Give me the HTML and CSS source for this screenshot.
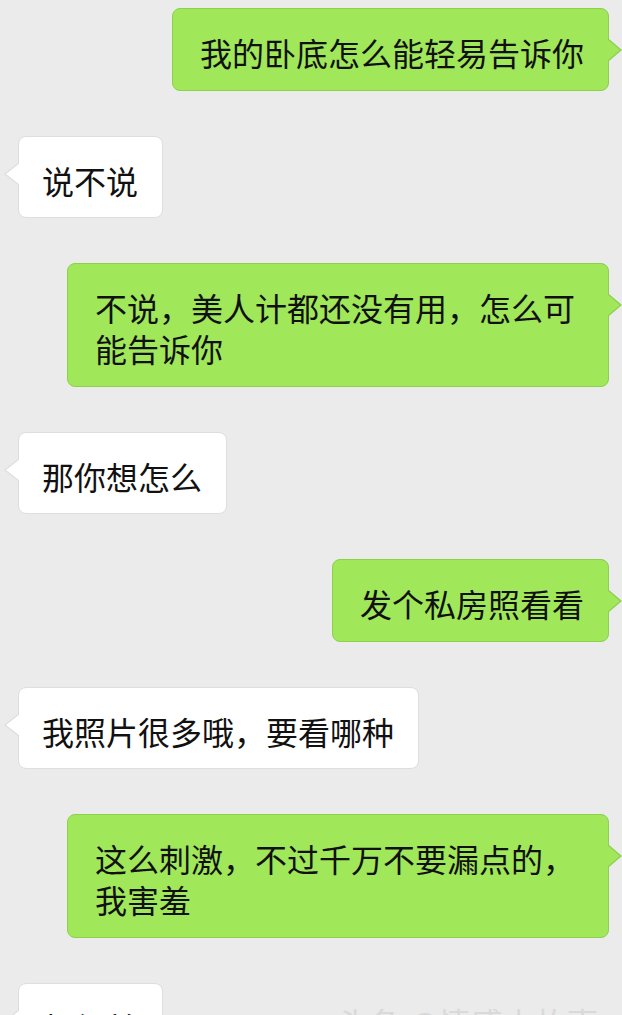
FILE: index.html
```html
<!DOCTYPE html>
<html lang="zh-CN">
  <head>
    <meta charset="UTF-8" />
    <meta name="viewport" content="width=device-width, initial-scale=1.0" />
    <title>聊天记录</title>
    <link rel="stylesheet" href="styles.css">
  </head>
  <body>
    <div class="chat">
      <div class="msg me">我的卧底怎么能轻易告诉你</div>
      <div class="msg other">说不说</div>
      <div class="msg me">不说，美人计都还没有用，怎么可能告诉你</div>
      <div class="msg other">那你想怎么</div>
      <div class="msg me">发个私房照看看</div>
      <div class="msg other">我照片很多哦，要看哪种</div>
      <div class="msg me">这么刺激，不过千万不要漏点的，我害羞</div>
      <div class="msg other">想得美</div>
    </div>
    <div class="mark">头条 @情感小故事</div>
  </body>
</html>
```

FILE: styles.css
```css
* {
  margin: 0;
  padding: 0;
  box-sizing: border-box;
}
html, body {
  background-color: #ebebeb;
  height: 100%;
  overflow: hidden;
}
body {
  position: relative;
  font-family: "Noto Sans CJK SC", "Noto Sans", sans-serif;
  color: #111;
}
.chat {
  display: flex;
  flex-direction: column;
  gap: 45px;
  padding: 8px 13px 0 18px;
}
.msg {
  position: relative;
  max-width: 542px;
  padding: 23px 24px 16.5px 27px;
  font-size: 32px;
  line-height: 41px;
  border-radius: 8px;
  border: 1px solid;
}
.me {
  align-self: flex-end;
  background: #a0e75a;
  border-color: #8dd04c;
}
.other {
  align-self: flex-start;
  padding-left: 23px;
  background: #fff;
  border-color: #dedede;
}

/* bubble tails */
.msg::before,
.msg::after {
  content: "";
  position: absolute;
  width: 0;
  height: 0;
  border-top: 11px solid transparent;
  border-bottom: 11px solid transparent;
}
.me::before {
  right: -14px;
  top: 30px;
  border-left: 13px solid #8dd04c;
}
.me::after {
  right: -12px;
  top: 30px;
  border-left: 13px solid #a0e75a;
}
.other::before {
  left: -15px;
  top: 26px;
  border-right: 14px solid #dedede;
}
.other::after {
  left: -13px;
  top: 26px;
  border-right: 14px solid #fff;
}

.mark {
  position: absolute;
  left: 337px;
  top: 1002px;
  font-size: 32px;
  line-height: 41px;
  color: #d9d9d9;
  white-space: nowrap;
}
```
